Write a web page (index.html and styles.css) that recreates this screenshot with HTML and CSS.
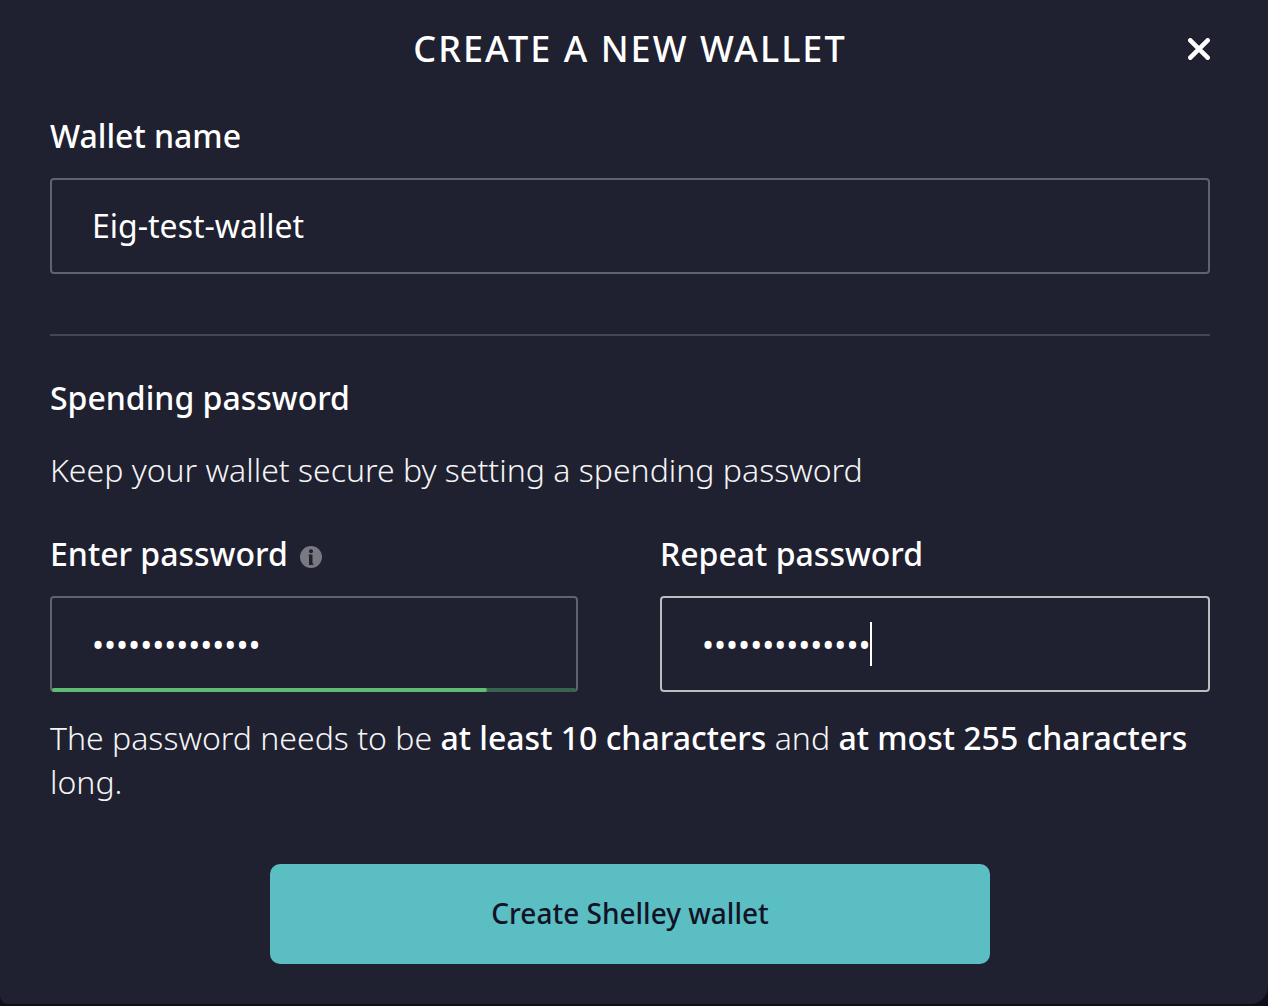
FILE: index.html
```html
<!DOCTYPE html>
<html lang="en">
<head>
<meta charset="utf-8">
<title>Create a new wallet</title>
<link rel="stylesheet" href="styles.css">
</head>
<body>
<main class="dialog">
  <header class="header">
    <h1 class="title">CREATE A NEW WALLET</h1>
    <button class="close" type="button" aria-label="Close">
      <svg width="22" height="22" viewBox="0 0 22 22" aria-hidden="true"><path d="M2.300 2.300l17.400 17.400M19.700 2.300L2.300 19.700" stroke="currentColor" stroke-width="4.600" stroke-linecap="round" fill="none"/></svg>
    </button>
  </header>
  <form class="form">
    <div class="field">
      <label class="label" for="name">Wallet name</label>
      <input class="input" id="name" type="text" value="Eig-test-wallet">
    </div>
    <hr class="divider">
    <h2 class="label">Spending password</h2>
    <p class="text intro">Keep your wallet secure by setting a spending password</p>
    <div class="passwords">
      <div class="field">
        <div class="label-row">
          <label class="label" for="password">Enter password</label>
          <svg class="info" width="22" height="22" viewBox="0 0 22 22" aria-hidden="true"><circle cx="11" cy="11" r="11" fill="#797982"/><circle cx="11" cy="5.200" r="2" fill="#1f2030"/><path d="M8.500 8.500h4v9.200h1v1.300H9v-9.500h-.5z" fill="#1f2030"/></svg>
        </div>
        <div class="input-wrap">
          <input class="input secret" id="password" type="password" value="12345678901234">
          <div class="strength"><div class="strength-bar"></div></div>
        </div>
      </div>
      <div class="field">
        <label class="label" for="repeat">Repeat password</label>
        <div class="input-wrap">
          <input class="input secret active" id="repeat" type="password" value="12345678901234">
          <span class="caret"></span>
        </div>
      </div>
    </div>
    <p class="text hint">The password needs to be <b>at least 10 characters</b> and <b>at most 255 characters</b> long.</p>
    <button class="submit" type="button">Create Shelley wallet</button>
  </form>
</main>
</body>
</html>
```
FILE: styles.css
```css
* { box-sizing: border-box; }
body {
  margin: 0;
  background: #0d0e1a;
  color: #fff;
  font: 400 32px/44px "Noto Sans", sans-serif;
}
.dialog {
  background: #1f2030;
  border-radius: 0 0 18px 8px;
  padding: 24px 58px 40px 50px;
}
.header { display: grid; grid-template-columns: 22px 1fr 22px; align-items: center; height: 50px; }
.title { grid-column: 2; margin: 0; text-align: center; font-size: 36px; font-weight: 500; letter-spacing: 2px; }
.close { display: flex; padding: 0; border: 0; background: none; color: #fff; }
.form { padding-top: 40px; }
.field { display: flex; flex-direction: column; gap: 20px; min-width: 0; }
.label { margin: 0; font-size: 32px; line-height: 44px; font-weight: 500; }
.input {
  display: block;
  width: 100%;
  height: 96px;
  padding: 0 40px 2px;
  border: 2px solid #62626e;
  border-radius: 4px;
  background: transparent;
  color: #fff;
  font: inherit;
  outline: none;
}
.secret { padding-bottom: 0; }
.divider { height: 2px; margin: 60px 0 40px; border: 0; background: #454653; }
.text { margin: 0; font-weight: 300; color: #f4f4f5; }
.intro { margin: 28px 0 40px; }
.passwords { display: grid; grid-template-columns: 528fr 550fr; gap: 82px; }
.label-row { display: flex; align-items: center; gap: 12px; }
.info { margin-top: 6px; }
.input-wrap { position: relative; }
.active { border-color: #bcbcc1; }
.strength { position: absolute; left: 2px; right: 2px; bottom: 0; height: 4px; border-radius: 2px; background: #3a634f; }
.strength-bar { width: 83%; height: 4px; border-radius: 2px; background: #5fbc73; }
.caret { position: absolute; left: 210px; top: 26px; width: 2px; height: 44px; background: #fff; }
.hint { margin-top: 24px; }
.hint b { font-weight: 500; color: #fff; }
.submit {
  display: block;
  width: 62%;
  height: 100px;
  margin: 60px auto 0;
  padding: 0 0 2px;
  border: 0;
  border-radius: 10px;
  background: #5abec3;
  color: #121326;
  font: 500 28px/40px "Noto Sans", sans-serif;
}
```
